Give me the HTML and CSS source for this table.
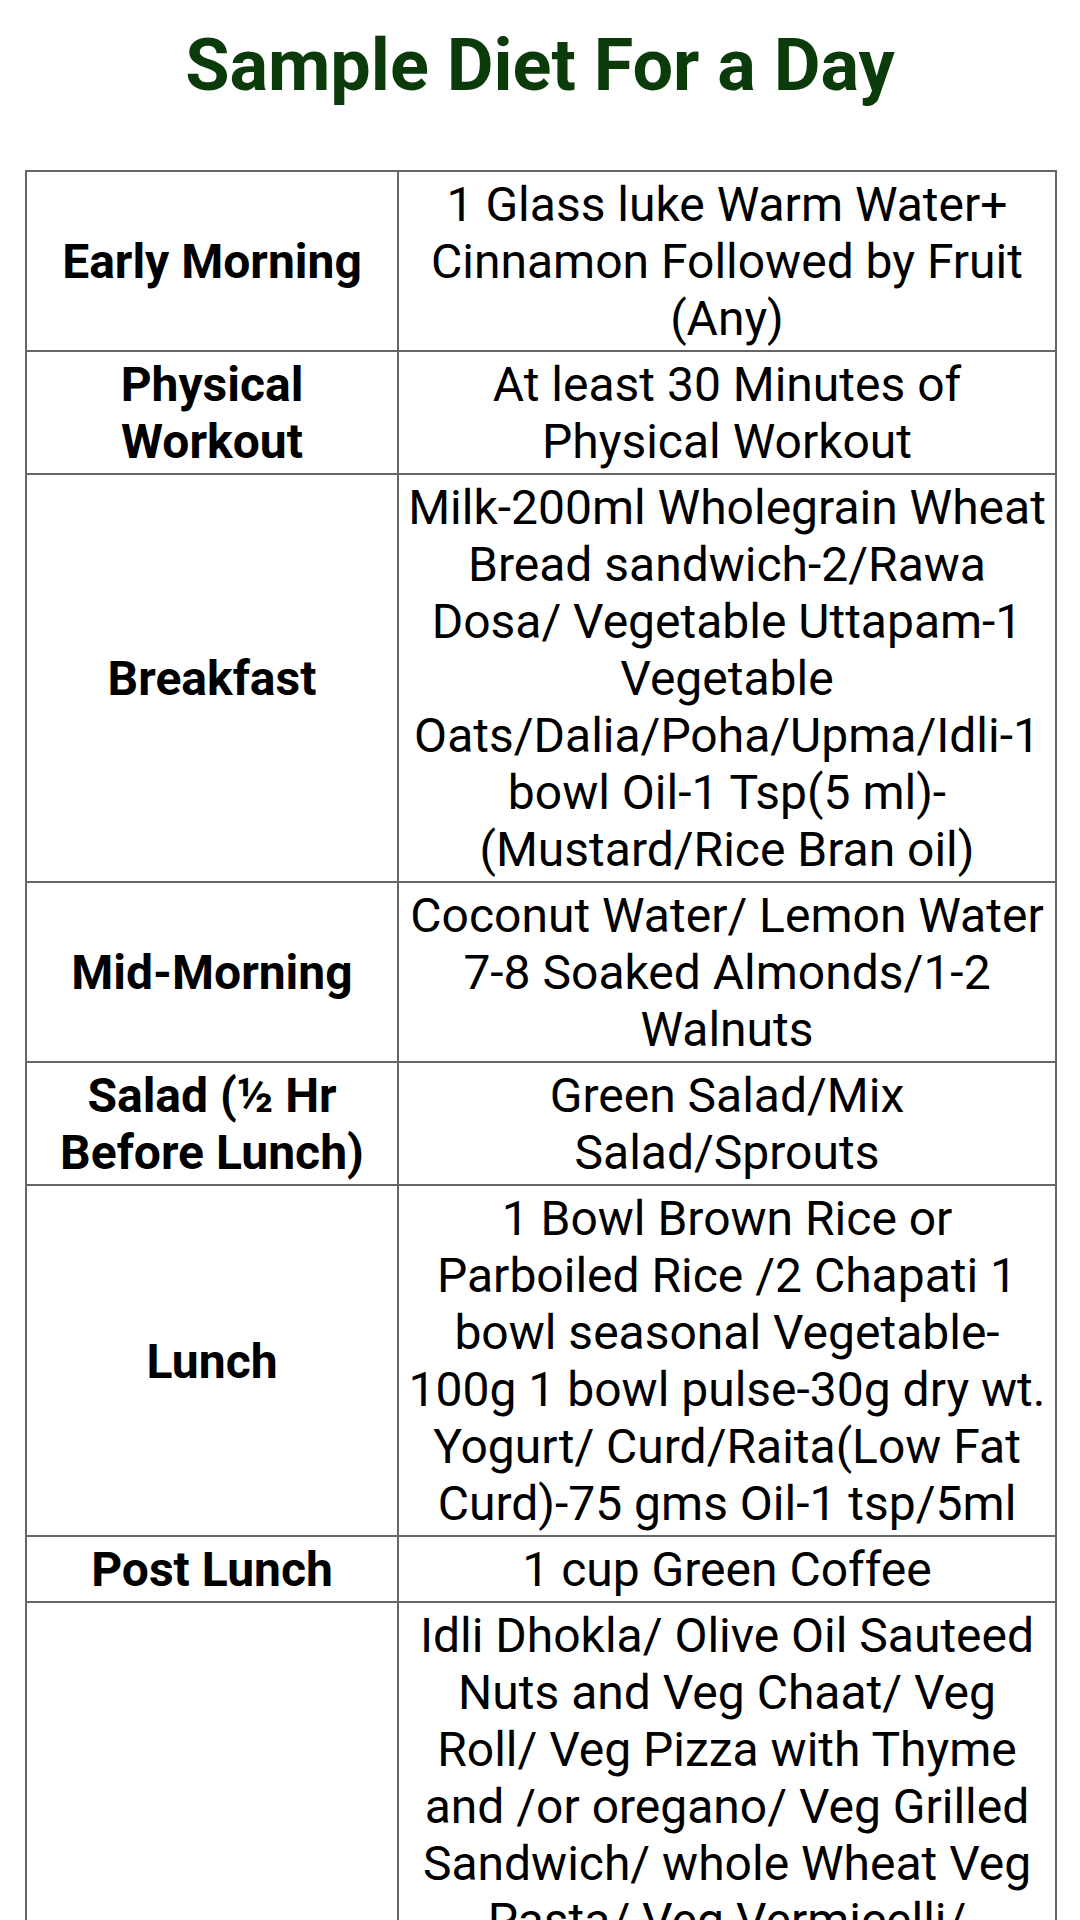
FILE: index.html
```html
<!DOCTYPE html>
<html>
<head>
<meta charset="utf-8">
<link rel="stylesheet" href="styles.css">
</head>
<body>
<h1 class="title">Sample Diet For a Day</h1>
<table class="diet">
  <tr><th>Early Morning</th><td>1 Glass luke Warm Water+ Cinnamon Followed by Fruit (Any)</td></tr>
  <tr><th>Physical Workout</th><td>At least 30 Minutes of Physical Workout</td></tr>
  <tr><th>Breakfast</th><td>Milk-200ml Wholegrain Wheat Bread sandwich-2/Rawa Dosa/ Vegetable Uttapam-1 Vegetable Oats/Dalia/Poha/Upma/Idli-1 bowl Oil-1 Tsp(5 ml)-(Mustard/Rice Bran oil)</td></tr>
  <tr><th>Mid-Morning</th><td>Coconut Water/ Lemon Water 7-8 Soaked Almonds/1-2 Walnuts</td></tr>
  <tr><th>Salad (½ Hr Before Lunch)</th><td>Green Salad/Mix Salad/Sprouts</td></tr>
  <tr><th>Lunch</th><td>1 Bowl Brown Rice or Parboiled Rice /2 Chapati 1 bowl seasonal Vegetable-100g 1 bowl pulse-30g dry wt. Yogurt/ Curd/Raita(Low Fat Curd)-75 gms Oil-1 tsp/5ml</td></tr>
  <tr><th>Post Lunch</th><td>1 cup Green Coffee</td></tr>
  <tr><th>Evening Snack</th><td>Idli Dhokla/ Olive Oil Sauteed Nuts and Veg Chaat/ Veg Roll/ Veg Pizza with Thyme and /or oregano/ Veg Grilled Sandwich/ whole Wheat Veg Pasta/ Veg Vermicelli/ Roasted Chana/ Sprouts Chaat/ Vegetable Upma/ Baked Vegetable Cutlet/ Multigrain Khakhra/ Makhana/ Puffed Rice Bhel/ Steamed Corn Chaat/ Vegetable Soup/ Paneer Tikka/ 1 cup Green Tea or Lemon Tea without Sugar</td></tr>
</table>
</body>
</html>
```

FILE: styles.css
```css
html, body {
  margin: 0;
  padding: 0;
  background: #ffffff;
}
body {
  font-family: Roboto, "Noto Sans", sans-serif;
  color: #000;
}
.title {
  margin: 0;
  padding-top: 24px;
  height: 170px;
  box-sizing: border-box;
  font-size: 72px;
  font-weight: 700;
  line-height: 84px;
  text-align: center;
  color: #0b3b0b;
}
.diet {
  margin-left: 25px;
  width: 1032px;
  border-collapse: collapse;
  font-size: 48px;
  line-height: 57px;
}
.diet th, .diet td {
  border: 2px solid #666666;
  padding: 4px 6px 3px;
  text-align: center;
  vertical-align: middle;
}
.diet th {
  width: 358px;
  font-weight: 700;
}
```
